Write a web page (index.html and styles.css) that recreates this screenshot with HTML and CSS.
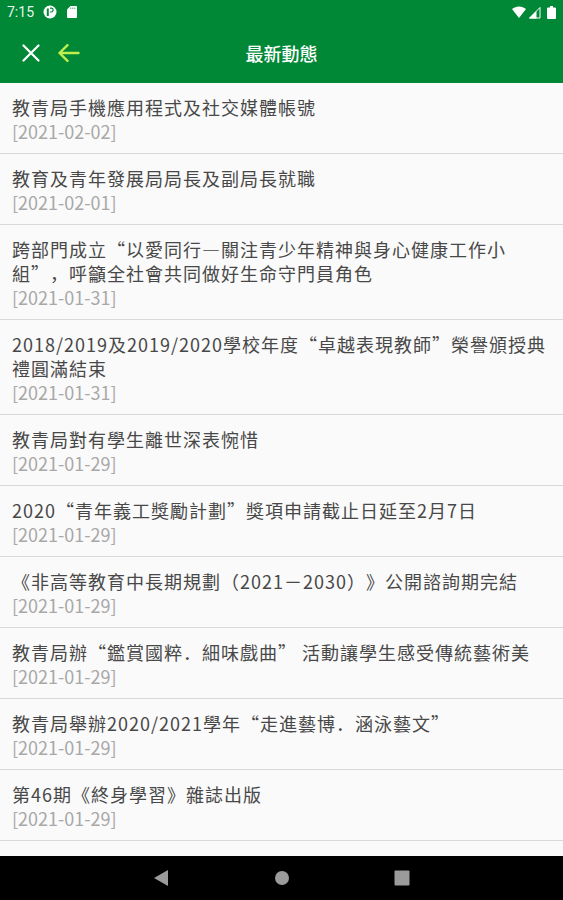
FILE: index.html
```
<!DOCTYPE html>
<html lang="zh-Hans">
<head>
    <meta charset="UTF-8">
    <meta name="viewport" content="width=device-width, initial-scale=1.0">
    <title>最新動態</title>
    <link rel="stylesheet" href="styles.css">
</head>
<body>
    <div class="status-bar">
        <div class="status-left">
            <span class="clock">7:15</span>
            <svg width="14" height="14" viewBox="0 0 14 14">
                <circle cx="7" cy="7" r="6.5" fill="#fff"/>
                <path d="M4.800 3.500v7.500" fill="none" stroke="#008837" stroke-width="2"/>
                <path d="M7 3.200h1.200a1.800 1.800 0 0 1 0 3.800H7" fill="none" stroke="#008837" stroke-width="1.200"/>
            </svg>
            <svg width="12" height="14" viewBox="0 0 12 14">
                <path d="M4.500 1H10a1 1 0 0 1 1 1v10a1 1 0 0 1-1 1H2a1 1 0 0 1-1-1V4.500z" fill="#fff"/>
                <path d="M4.800 2.500v1.500M6.800 2.500v1.500M8.800 2.500v1.500" stroke="#008837" stroke-width=".7"/>
            </svg>
        </div>
        <div class="status-right">
            <svg width="14" height="12" viewBox="0 0 14 12">
                <path d="M0 3C4-.500 10-.500 14 3L7 12z" fill="#fff"/>
            </svg>
            <svg width="13" height="13" viewBox="0 0 13 13">
                <path d="M12 1.500V12H1.500z" fill="none" stroke="#fff"/>
                <path d="M8.500 5v7.500H1z" fill="#fff"/>
            </svg>
            <svg class="battery" width="9" height="13" viewBox="0 0 9 13">
                <path d="M3 0h3v1.500h1.500A1.300 1.300 0 0 1 9 3v9a1 1 0 0 1-1 1H1a1 1 0 0 1-1-1V3a1.300 1.300 0 0 1 1.500-1.500H3z" fill="#fff"/>
            </svg>
        </div>
    </div>

    <header class="toolbar">
        <div class="toolbar-buttons">
            <button type="button" aria-label="關閉">
                <svg width="18" height="18" viewBox="0 0 18 18" fill="none" stroke="#fff" stroke-width="2.200" stroke-linecap="round">
                    <path d="M1.500 1.500l15 15M16.500 1.500l-15 15"/>
                </svg>
            </button>
            <button type="button" aria-label="返回">
                <svg width="22" height="18" viewBox="0 0 22 18" fill="none" stroke="#c0ee4c" stroke-width="2.400" stroke-linecap="round" stroke-linejoin="round">
                    <path d="M20.500 9H1.500M9.500 1.200L1.500 9l8 7.800"/>
                </svg>
            </button>
        </div>
        <h1>最新動態</h1>
    </header>

    <main>
        <ul class="news-list">
            <li>
                <h2>教青局手機應用程式及社交媒體帳號</h2>
                <time datetime="2021-02-02">[2021-02-02]</time>
            </li>
            <li>
                <h2>教育及青年發展局局長及副局長就職</h2>
                <time datetime="2021-02-01">[2021-02-01]</time>
            </li>
            <li>
                <h2>跨部門成立“以愛同行—關注青少年精神與身心健康工作小組”，呼籲全社會共同做好生命守門員角色</h2>
                <time datetime="2021-01-31">[2021-01-31]</time>
            </li>
            <li>
                <h2>2018/2019及2019/2020學校年度“卓越表現教師”榮譽頒授典禮圓滿結束</h2>
                <time datetime="2021-01-31">[2021-01-31]</time>
            </li>
            <li>
                <h2>教青局對有學生離世深表惋惜</h2>
                <time datetime="2021-01-29">[2021-01-29]</time>
            </li>
            <li>
                <h2>2020“青年義工獎勵計劃”獎項申請截止日延至2月7日</h2>
                <time datetime="2021-01-29">[2021-01-29]</time>
            </li>
            <li>
                <h2>《非高等教育中長期規劃（2021－2030）》公開諮詢期完結</h2>
                <time datetime="2021-01-29">[2021-01-29]</time>
            </li>
            <li>
                <h2>教青局辦“鑑賞國粹．細味戲曲” 活動讓學生感受傳統藝術美</h2>
                <time datetime="2021-01-29">[2021-01-29]</time>
            </li>
            <li>
                <h2>教青局舉辦2020/2021學年“走進藝博．涵泳藝文”</h2>
                <time datetime="2021-01-29">[2021-01-29]</time>
            </li>
            <li>
                <h2>第46期《終身學習》雜誌出版</h2>
                <time datetime="2021-01-29">[2021-01-29]</time>
            </li>
        </ul>
    </main>

    <nav class="nav-bar">
        <button type="button" aria-label="Back">
            <svg width="16" height="16" viewBox="0 0 16 16"><path d="M0 8L14 0v16z" fill="#9b9b9b"/></svg>
        </button>
        <button type="button" aria-label="Home">
            <svg width="16" height="16" viewBox="0 0 16 16"><circle cx="8" cy="8" r="7" fill="#9b9b9b"/></svg>
        </button>
        <button type="button" aria-label="Recent">
            <svg width="16" height="16" viewBox="0 0 16 16"><rect x=".5" y=".5" width="15" height="15" rx="1" fill="#9b9b9b"/></svg>
        </button>
    </nav>
</body>
</html>
```

FILE: styles.css
```
* {
    box-sizing: border-box;
}
body {
    display: flex;
    flex-direction: column;
    min-height: 100vh;
    margin: 0;
    background: #fafafa;
    font-family: "Noto Sans CJK SC", sans-serif;
    font-size: 18px;
    line-height: 24px;
    text-spacing-trim: space-all;
}
svg {
    display: block;
}
button {
    padding: 0;
    border: none;
    background: none;
    cursor: pointer;
}
h1, h2 {
    margin: 0;
    font-size: 18px;
}
.status-bar {
    display: flex;
    justify-content: space-between;
    height: 24px;
    padding: 0 7px;
    background: #008837;
}
.status-left, .status-right {
    display: flex;
    align-items: center;
}
.status-left {
    gap: 9px;
}
.status-right {
    gap: 2px;
}
.battery {
    margin-left: 4px;
}
.clock {
    color: #e6f5ea;
    font-family: Roboto, sans-serif;
    font-size: 14px;
}
.toolbar {
    display: grid;
    grid-template-columns: 1fr auto 1fr;
    align-items: center;
    height: 59px;
    padding: 0 22px 2px;
    background: #008837;
    color: #fff;
}
.toolbar-buttons {
    display: flex;
    gap: 18px;
}
.toolbar h1 {
    font-weight: 500;
}
main {
    flex: 1;
}
.news-list {
    margin: 0;
    padding: 0;
    list-style: none;
}
.news-list li {
    padding: 12px 12px 10px;
    border-bottom: 1px solid #d9d9d9;
}
.news-list h2 {
    color: #484848;
    font-weight: 400;
    letter-spacing: 1px;
}
.news-list time {
    display: block;
    color: #a8a8a8;
}
.nav-bar {
    display: flex;
    justify-content: center;
    align-items: center;
    gap: 104px;
    height: 44px;
    background: #000;
}
```
